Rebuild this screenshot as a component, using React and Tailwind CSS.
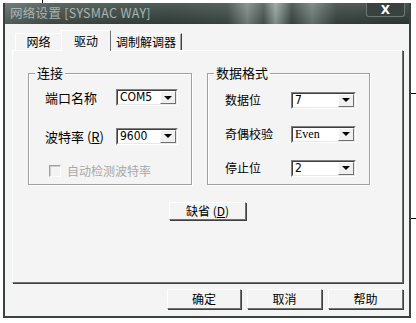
import React from "react";

const cjk = "font-['SimSun','Noto_Sans_CJK_SC',sans-serif]";

const Combo = ({ value, width, serif }) => (
  <div
    className={`flex h-[17px] ${width} border border-t-[#808080] border-l-[#808080] border-r-white border-b-white bg-white`}
  >
    <div className="flex flex-1 border border-t-[#404040] border-l-[#404040] border-r-[#e8e8e8] border-b-[#e8e8e8]">
      <span
        className={`flex-1 pl-[2px] leading-[13px] text-black ${
          serif ? "font-['Liberation_Serif',serif] text-[12px]" : "font-['DejaVu_Sans_Condensed','DejaVu_Sans',sans-serif] text-[12px]"
        }`}
      >
        {value}
      </span>
      <div className="flex w-[16px] items-center justify-center border border-t-white border-l-white border-r-[#707070] border-b-[#707070] bg-[#f0f0f0]">
        <div className="h-0 w-0 border-x-[4px] border-t-[4px] border-x-transparent border-t-black" />
      </div>
    </div>
  </div>
);

const Button = ({ children, className }) => (
  <div
    className={`flex items-center justify-center border border-t-white border-l-white border-r-[#707070] border-b-[#707070] bg-[#f4f4f4] text-[12px] text-black shadow-[1px_1px_0_#404040] ${className}`}
  >
    {children}
  </div>
);

const Group = ({ title, className, children }) => (
  <div className={`relative border border-[#a0a0a0] shadow-[inset_1px_1px_0_white,1px_1px_0_white] ${className}`}>
    <span className="absolute left-[6px] top-[-8px] bg-[#f4f4f4] px-[2px] text-[13px] leading-[14px] text-black">
      {title}
    </span>
    {children}
  </div>
);

const App = () => {
  return (
    <div className={`relative h-[323px] w-[416px] overflow-hidden bg-white ${cjk}`}>
      <div className="absolute left-[42px] top-0 h-[3px] w-px bg-black" />
      <div className="absolute left-[411px] top-[93px] h-px w-[5px] bg-black" />
      <div className="absolute left-[411px] top-[218px] h-px w-[5px] bg-black" />

      <div className="ml-[3px] mt-[3px] flex h-[315px] w-[408px] flex-col border-2 border-[#3c4240] border-t-0">
        {/* title bar */}
        <div className="relative flex h-[21px] items-center bg-[linear-gradient(to_right,#5f6c67_0%,#46534e_12%,#37443f_40%,#404e48_55%,#7f8c87_60%,#4c5954_64%,#97a59f_67%,#3e4b46_71%,#71807a_76%,#3b4843_82%,#303c37_100%)]">
          <div className="absolute inset-0 bg-[linear-gradient(to_bottom,rgba(255,255,255,0.12),rgba(0,0,0,0.15))]" />
          <span className="relative ml-[5px] text-[12.5px] tracking-[0.3px] text-[#aab4b0]">
            网络设置 [SYSMAC WAY]
          </span>
          <div className="absolute right-[4px] top-0 flex h-[14px] w-[39px] items-center justify-center rounded-b-[3px] border border-t-0 border-[#6c7672] bg-[#3a4240]">
            <span className="font-['DejaVu_Sans',sans-serif] text-[12px] font-bold leading-none text-white">X</span>
          </div>
        </div>

        {/* client */}
        <div className="flex flex-1 flex-col bg-[#f4f4f4] pl-[7px] pr-[6px] pb-[7px]">
          {/* tabs */}
          <div className="mt-[7px] flex h-[19px] items-end pl-[3px]">
            <div className="flex h-[17px] w-[46px] items-center justify-center border-l border-t border-white text-[12px] text-black">
              网络
            </div>
            <div className="relative z-10 -mb-px flex h-[21px] w-[50px] items-start justify-center border-x border-t border-l-white border-t-white border-r-[#707070] bg-[#f4f4f4] pt-[1px] text-[12px] text-black">
              驱动
            </div>
            <div className="flex h-[17px] w-[71px] items-center justify-center border-r border-t border-t-white border-r-[#404040] text-[12px] text-black shadow-[inset_-1px_0_0_#a0a0a0]">
              调制解调器
            </div>
          </div>

          {/* panel */}
          <div className="flex h-[233px] flex-col border border-t-white border-l-white border-r-[#707070] border-b-[#707070] shadow-[1px_1px_0_#404040] pt-[22px]">
            <div className="flex gap-[15px] pl-[15px]">
              <Group title="连接" className="h-[112px] w-[164px]">
                <div className="flex flex-col pl-[16px] pt-[14px]">
                  <div className="flex items-center">
                    <span className="w-[71px] text-[13px] text-black">端口名称</span>
                    <Combo value="COM5" width="w-[62px]" />
                  </div>
                  <div className="mt-[19px] flex items-center">
                    <span className="w-[71px] text-[13px] text-black">波特率 (<span className="underline">R</span>)</span>
                    <Combo value="9600" width="w-[62px]" />
                  </div>
                  <div className="mt-[16px] flex items-center">
                    <div className="ml-[4px] h-[12px] w-[12px] border border-t-[#a0a0a0] border-l-[#a0a0a0] border-r-white border-b-white bg-[#f4f4f4] shadow-[inset_1px_1px_0_#d0d0d0]" />
                    <span className="ml-[6px] text-[12px] text-[#a8a8a8]">自动检测波特率</span>
                  </div>
                </div>
              </Group>
              <Group title="数据格式" className="h-[112px] w-[163px]">
                <div className="flex flex-col pl-[17px] pt-[17px]">
                  <div className="flex items-center">
                    <span className="w-[66px] text-[12px] text-black">数据位</span>
                    <Combo value="7" width="w-[65px]" />
                  </div>
                  <div className="mt-[16px] flex items-center">
                    <span className="w-[66px] text-[12px] text-black">奇偶校验</span>
                    <Combo value="Even" width="w-[65px]" serif />
                  </div>
                  <div className="mt-[16px] flex items-center">
                    <span className="w-[66px] text-[12px] text-black">停止位</span>
                    <Combo value="2" width="w-[65px]" />
                  </div>
                </div>
              </Group>
            </div>
            <div className="mt-[17px] flex justify-center">
              <Button className="h-[18px] w-[77px]">
                缺省 (<span className="underline">D</span>)
              </Button>
            </div>
          </div>

          {/* buttons */}
          <div className="mt-[6px] flex justify-end gap-[6px]">
            <Button className="h-[20px] w-[74px]">确定</Button>
            <Button className="h-[20px] w-[75px]">取消</Button>
            <Button className="h-[20px] w-[75px]">帮助</Button>
          </div>
        </div>
      </div>
    </div>
  );
};

export default App;
